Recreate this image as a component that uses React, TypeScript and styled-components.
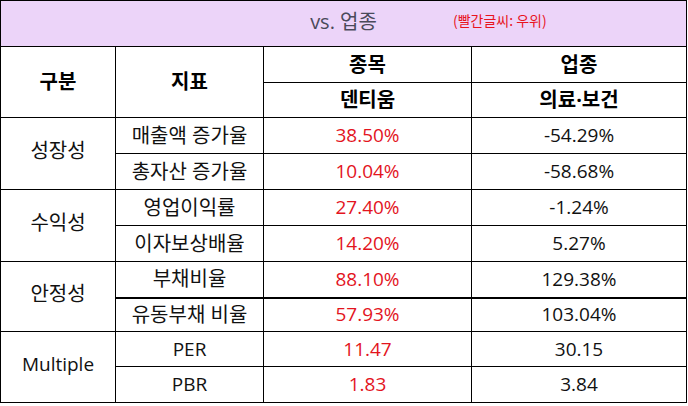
import React from "react";
import styled, { createGlobalStyle } from "styled-components";

const Global = createGlobalStyle`
  html, body { margin: 0; padding: 0; background: #ffffff; }
  body { font-family: "Open Sans", "Noto Sans CJK KR", sans-serif; }
`;

const Table = styled.table`
  width: 686px;
  border-collapse: collapse;
  table-layout: fixed;
  border: 1.5px solid #000;
  color: #111;
`;

const Tr = styled.tr<{ $h: number }>`
  height: ${(p) => p.$h}px;
`;

const TitleCell = styled.td`
  padding: 0;
  background: #ecd4f9;
  border: 1px solid #000;
`;

const TitleBar = styled.div`
  display: grid;
  grid-template-columns: 1fr auto 1fr;
  align-items: center;
  padding-bottom: 4px;
  line-height: 1.2;
`;

const Title = styled.span`
  grid-column: 2;
  font-size: 20px;
  color: #4a4a5a;
`;

const Note = styled.span`
  grid-column: 3;
  justify-self: start;
  margin-left: 76px;
  font-size: 14px;
  color: #e8141e;
  font-family: "Noto Sans CJK KR", sans-serif;
  margin-top: -3px;
`;

const Th = styled.td`
  padding: 0;
  text-align: center;
  vertical-align: middle;
  font-weight: 700;
  font-size: 20px;
  line-height: 1.2;
  color: #000;
  border: 1px solid #000;
  font-family: "Open Sans", "Noto Sans CJK KR", sans-serif;
`;

const Td = styled.td<{ $red?: boolean; $thick?: boolean; $hangul?: boolean }>`
  padding: 0;
  text-align: center;
  vertical-align: middle;
  line-height: 1.2;
  font-size: ${(p) => (p.$hangul ? "20px" : "19px")};
  color: ${(p) => (p.$red ? "#e3141e" : "#111")};
  border: 1px solid #000;
  border-top: ${(p) => (p.$thick ? "2.5px solid #000" : "1px solid #000")};
  white-space: nowrap;
`;

const Group = styled(Td)`
  padding-bottom: 5px;
`;

type Row = { name: string; mine: string; ind: string; h: number };
type Section = { label: string; rows: Row[] };

const data: Section[] = [
  {
    label: "성장성",
    rows: [
      { name: "매출액 증가율", mine: "38.50%", ind: "-54.29%", h: 36 },
      { name: "총자산 증가율", mine: "10.04%", ind: "-58.68%", h: 36 },
    ],
  },
  {
    label: "수익성",
    rows: [
      { name: "영업이익률", mine: "27.40%", ind: "-1.24%", h: 36 },
      { name: "이자보상배율", mine: "14.20%", ind: "5.27%", h: 36 },
    ],
  },
  {
    label: "안정성",
    rows: [
      { name: "부채비율", mine: "88.10%", ind: "129.38%", h: 36 },
      { name: "유동부채 비율", mine: "57.93%", ind: "103.04%", h: 34 },
    ],
  },
  {
    label: "Multiple",
    rows: [
      { name: "PER", mine: "11.47", ind: "30.15", h: 35 },
      { name: "PBR", mine: "1.83", ind: "3.84", h: 36 },
    ],
  },
];

const isHangul = (s: string) => /[\uac00-\ud7a3]/.test(s);

export default function App() {
  return (
    <>
      <Global />
      <Table>
        <colgroup>
          <col style={{ width: 115 }} />
          <col style={{ width: 148 }} />
          <col style={{ width: 208 }} />
          <col style={{ width: 215 }} />
        </colgroup>
        <tbody>
          <Tr $h={46}>
            <TitleCell colSpan={4}>
              <TitleBar>
                <Title>vs. 업종</Title>
                <Note>(빨간글씨: 우위)</Note>
              </TitleBar>
            </TitleCell>
          </Tr>
          <Tr $h={36}>
            <Th rowSpan={2}>구분</Th>
            <Th rowSpan={2}>지표</Th>
            <Th>종목</Th>
            <Th>업종</Th>
          </Tr>
          <Tr $h={35}>
            <Th>덴티움</Th>
            <Th>의료·보건</Th>
          </Tr>
          {data.map((s, si) =>
            s.rows.map((r, ri) => {
              const thick = si === 2 && ri === 1;
              return (
                <Tr $h={r.h} key={`${si}-${ri}`}>
                  {ri === 0 && (
                    <Group rowSpan={s.rows.length} $hangul={isHangul(s.label)}>
                      {s.label}
                    </Group>
                  )}
                  <Td $thick={thick} $hangul={isHangul(r.name)}>
                    {r.name}
                  </Td>
                  <Td $thick={thick} $red>
                    {r.mine}
                  </Td>
                  <Td $thick={thick}>{r.ind}</Td>
                </Tr>
              );
            })
          )}
        </tbody>
      </Table>
    </>
  );
}
